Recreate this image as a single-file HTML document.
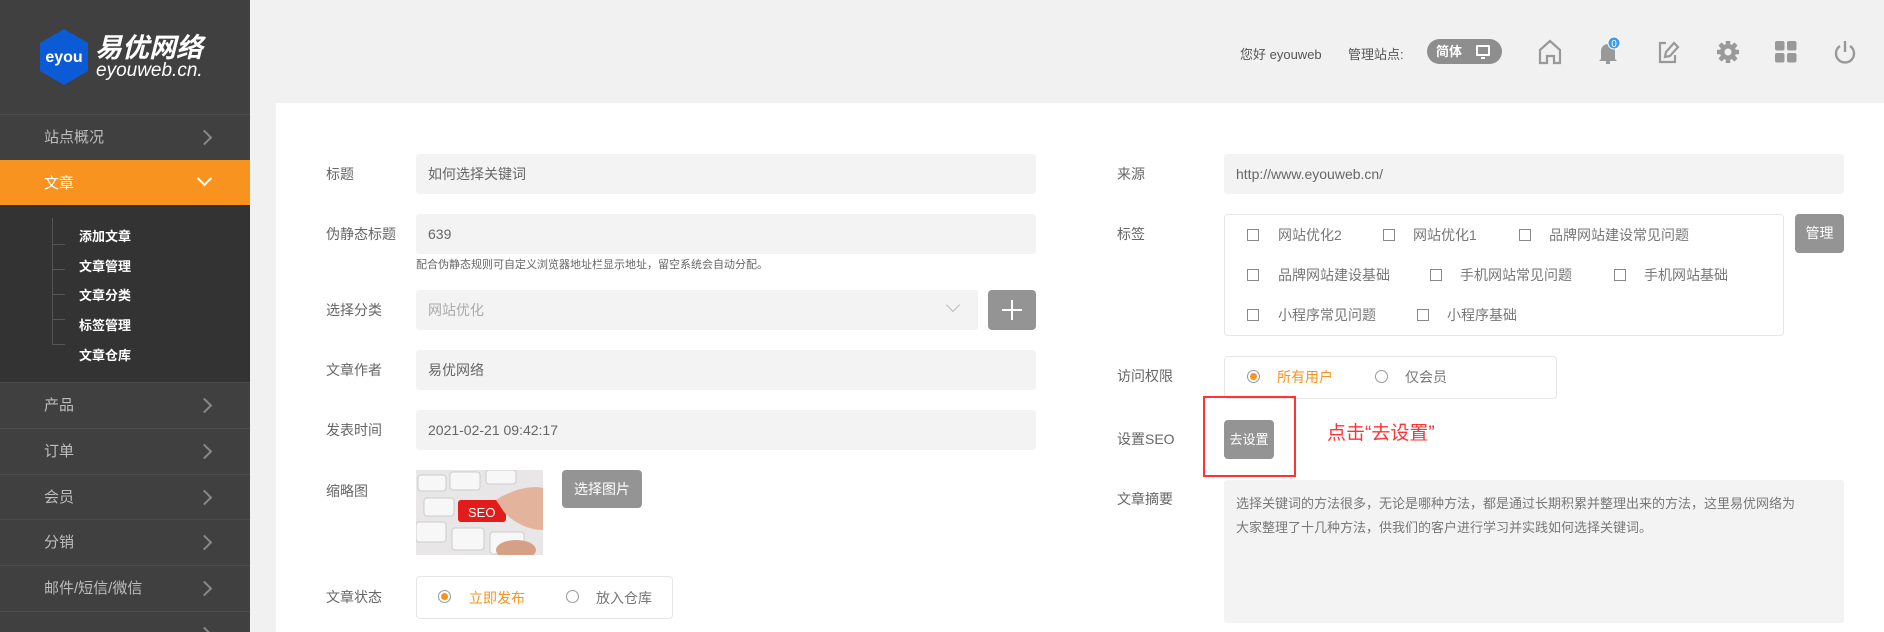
<!DOCTYPE html>
<html><head><meta charset="utf-8"><style>
*{margin:0;padding:0;box-sizing:border-box}
html,body{width:1884px;height:632px;overflow:hidden}
body{background:#f1f1f1;font-family:"Liberation Sans","Noto Sans CJK SC",sans-serif;position:relative}
.a{position:absolute}
.mi{position:absolute;left:0;width:250px;height:46px;border-top:1px solid #4c4c4c;color:#bdbdbd;font-size:15px;line-height:45px;padding-left:44px;overflow:hidden}
.mi .ar{position:absolute;left:199px;top:17px;width:11px;height:11px;border-right:2px solid #888;border-top:2px solid #888;transform:rotate(45deg)}
.sub{position:absolute;left:79px;color:#fff;font-size:13px;font-weight:bold;line-height:16px}
.tl{position:absolute;left:53px;width:12px;border-top:1px solid #555}
.lab{position:absolute;font-size:14px;color:#666;line-height:16px}
.inp{position:absolute;background:#f3f3f3;border-radius:3px;height:40px;font-size:14px;color:#666;line-height:40px;padding-left:12px}
.btn{position:absolute;background:#949494;border-radius:4px;color:#fff;font-size:14px;text-align:center}
.cb{position:absolute;width:12px;height:12px;border:1px solid #888}
.ct{position:absolute;font-size:14px;color:#777;line-height:16px}
.rd{position:absolute;width:13px;height:13px;border:1px solid #999;border-radius:50%}
.rd.on::after{content:"";position:absolute;left:2px;top:2px;width:7px;height:7px;border-radius:50%;background:#f7931e}
.box{position:absolute;border:1px solid #e6e6e6;border-radius:4px;background:#fff}
</style></head><body>
<div class="a" style="left:0;top:0;width:250px;height:632px;background:#404040"></div>
<svg class="a" style="left:40px;top:29px" width="48" height="56" viewBox="0 0 48 56"><polygon points="24,0 48,14 48,42 24,56 0,42 0,14" fill="#0b5bd6"/><text x="24" y="33" font-family="Liberation Sans" font-weight="bold" font-size="16" fill="#fff" text-anchor="middle">eyou</text></svg>
<div class="a" style="left:95px;top:33px;color:#fff;font-size:27px;font-weight:bold;font-style:italic;line-height:30px">易优网络</div>
<div class="a" style="left:96px;top:61px;color:#fff;font-size:19px;font-style:italic;line-height:20px">eyouweb.cn.</div>

<div class="mi" style="top:114px">站点概况<span class="ar"></span></div>
<div class="mi" style="top:160px;background:#f7931e;color:#fff;border-top-color:#f7931e">文章<span class="ar" style="transform:rotate(135deg);top:12px;border-color:#fff"></span></div>
<div class="a" style="left:0;top:205px;width:250px;height:177px;background:#333"></div>
<div class="a" style="left:52px;top:218px;width:1px;height:127px;background:#555"></div>
<div class="tl" style="top:244px"></div>
<div class="tl" style="top:269px"></div>
<div class="tl" style="top:294px"></div>
<div class="tl" style="top:319px"></div>
<div class="tl" style="top:344px"></div>
<div class="sub" style="top:229px">添加文章</div>
<div class="sub" style="top:259px">文章管理</div>
<div class="sub" style="top:288px">文章分类</div>
<div class="sub" style="top:318px">标签管理</div>
<div class="sub" style="top:348px">文章仓库</div>
<div class="mi" style="top:382px">产品<span class="ar"></span></div>
<div class="mi" style="top:428px">订单<span class="ar"></span></div>
<div class="mi" style="top:474px">会员<span class="ar"></span></div>
<div class="mi" style="top:519px">分销<span class="ar"></span></div>
<div class="mi" style="top:565px">邮件/短信/微信<span class="ar"></span></div>
<div class="mi" style="top:611px;height:21px"><span class="ar"></span></div>

<div class="a" style="left:1240px;top:44px;font-size:13px;color:#555">您好 eyouweb</div>
<div class="a" style="left:1348px;top:44px;font-size:13px;color:#555">管理站点:</div>
<div class="a" style="left:1427px;top:39px;width:75px;height:25px;border-radius:13px;background:#8e8e8e;color:#fff;font-size:13px;font-weight:bold;line-height:25px;padding-left:9px">简体</div>
<div class="a" style="left:1476px;top:45px;width:14px;height:11px;border:2px solid #fff;border-radius:1px"></div>
<div class="a" style="left:1481px;top:57px;width:4px;height:2px;background:#fff"></div>
<svg class="a" style="left:1537px;top:38px" width="26" height="28" viewBox="0 0 26 28" fill="none" stroke="#999" stroke-width="2.2"><path d="M3 12 L13 3 L23 12 V25 H17 V18 H10 V25 H3 Z"/></svg>
<svg class="a" style="left:1596px;top:36px" width="26" height="30" viewBox="0 0 26 30"><path d="M5 23 V15 A7 7 0 0 1 19 15 V23 L21 25 H3 Z" fill="#999"/><rect x="10" y="25" width="4" height="3" fill="#999"/><circle cx="18" cy="7" r="6" fill="#3d9be9" stroke="#fff" stroke-width="1"/><text x="18" y="11" font-size="10" fill="#fff" text-anchor="middle" font-family="Liberation Sans">0</text></svg>
<svg class="a" style="left:1655px;top:38px" width="26" height="28" viewBox="0 0 26 28" fill="none" stroke="#999" stroke-width="2.2"><path d="M11 5 H5 V24 H20 V17"/><path d="M10 19 L11 14 L19 5 L23 9 L15 18 Z"/></svg>
<svg class="a" style="left:1715px;top:39px" width="26" height="26" viewBox="0 0 26 26"><circle cx="13" cy="13" r="8" fill="#999"/><g stroke="#999" stroke-width="4.5"><path d="M13 2v22M2 13h22M5 5l16 16M21 5L5 21"/></g><circle cx="13" cy="13" r="3.5" fill="#f1f1f1"/></svg>
<svg class="a" style="left:1774px;top:40px" width="24" height="24" viewBox="0 0 24 24" fill="#999"><rect x="1" y="1" width="9.5" height="9.5" rx="2"/><rect x="13" y="1" width="9.5" height="9.5" rx="2"/><rect x="1" y="13" width="9.5" height="9.5" rx="2"/><rect x="13" y="13" width="9.5" height="9.5" rx="2"/></svg>
<svg class="a" style="left:1832px;top:38px" width="26" height="28" viewBox="0 0 26 28" fill="none" stroke="#999" stroke-width="2.4"><path d="M8 8 A9 9 0 1 0 18 8"/><path d="M13 3 V14"/></svg>

<div class="a" style="left:276px;top:103px;width:1608px;height:529px;background:#fff"></div>

<div class="lab" style="left:326px;top:166px">标题</div>
<div class="inp" style="left:416px;top:154px;width:620px">如何选择关键词</div>
<div class="lab" style="left:326px;top:226px">伪静态标题</div>
<div class="inp" style="left:416px;top:214px;width:620px">639</div>
<div class="a" style="left:416px;top:256px;font-size:11px;color:#666">配合伪静态规则可自定义浏览器地址栏显示地址，留空系统会自动分配。</div>
<div class="lab" style="left:326px;top:302px">选择分类</div>
<div class="inp" style="left:416px;top:290px;width:562px;color:#aaa">网站优化</div>
<div class="a" style="left:948px;top:300px;width:10px;height:10px;border-right:1px solid #bbb;border-bottom:1px solid #bbb;transform:rotate(45deg)"></div>
<div class="btn" style="left:988px;top:290px;width:48px;height:40px"></div>
<div class="a" style="left:1002px;top:309px;width:20px;height:2px;background:#fff"></div>
<div class="a" style="left:1011px;top:300px;width:2px;height:20px;background:#fff"></div>
<div class="lab" style="left:326px;top:362px">文章作者</div>
<div class="inp" style="left:416px;top:350px;width:620px">易优网络</div>
<div class="lab" style="left:326px;top:422px">发表时间</div>
<div class="inp" style="left:416px;top:410px;width:620px">2021-02-21 09:42:17</div>
<div class="lab" style="left:326px;top:483px">缩略图</div>
<svg class="a" style="left:416px;top:470px" width="127" height="85" viewBox="0 0 127 85">
<rect width="127" height="85" fill="#e8e6e6"/>
<g fill="#f7f7f7" stroke="#ccc" stroke-width="1">
<rect x="2" y="5" width="28" height="16" rx="3"/><rect x="34" y="2" width="30" height="18" rx="3"/><rect x="70" y="0" width="30" height="14" rx="3"/>
<rect x="8" y="28" width="30" height="18" rx="3"/><rect x="0" y="52" width="30" height="20" rx="3"/><rect x="36" y="58" width="32" height="22" rx="3"/><rect x="74" y="62" width="34" height="22" rx="3"/></g>
<rect x="42" y="30" width="48" height="22" rx="3" fill="#e21b1b"/>
<text x="52" y="47" font-family="Liberation Sans" font-size="13" fill="#fff">SEO</text>
<path d="M80 30 C95 20 115 15 127 18 V60 C110 60 95 50 88 42 Z" fill="#e4b39c"/>
<ellipse cx="100" cy="80" rx="20" ry="10" fill="#d6a087"/>
</svg>
<div class="btn" style="left:562px;top:470px;width:80px;height:38px;line-height:38px">选择图片</div>
<div class="lab" style="left:326px;top:589px">文章状态</div>
<div class="box" style="left:416px;top:576px;width:257px;height:43px"></div>
<div class="rd on" style="left:438px;top:590px"></div>
<div class="ct" style="left:469px;top:590px;color:#f7931e">立即发布</div>
<div class="rd" style="left:566px;top:590px"></div>
<div class="ct" style="left:596px;top:590px">放入仓库</div>

<div class="lab" style="left:1117px;top:166px">来源</div>
<div class="inp" style="left:1224px;top:154px;width:620px">http://www.eyouweb.cn/</div>
<div class="lab" style="left:1117px;top:226px">标签</div>
<div class="box" style="left:1224px;top:214px;width:560px;height:122px"></div>
<div class="cb" style="left:1247px;top:229px"></div><div class="ct" style="left:1278px;top:227px">网站优化2</div>
<div class="cb" style="left:1383px;top:229px"></div><div class="ct" style="left:1413px;top:227px">网站优化1</div>
<div class="cb" style="left:1519px;top:229px"></div><div class="ct" style="left:1549px;top:227px">品牌网站建设常见问题</div>
<div class="cb" style="left:1247px;top:269px"></div><div class="ct" style="left:1278px;top:267px">品牌网站建设基础</div>
<div class="cb" style="left:1430px;top:269px"></div><div class="ct" style="left:1460px;top:267px">手机网站常见问题</div>
<div class="cb" style="left:1614px;top:269px"></div><div class="ct" style="left:1644px;top:267px">手机网站基础</div>
<div class="cb" style="left:1247px;top:309px"></div><div class="ct" style="left:1278px;top:307px">小程序常见问题</div>
<div class="cb" style="left:1417px;top:309px"></div><div class="ct" style="left:1447px;top:307px">小程序基础</div>
<div class="btn" style="left:1795px;top:214px;width:49px;height:39px;line-height:39px">管理</div>
<div class="lab" style="left:1117px;top:368px">访问权限</div>
<div class="box" style="left:1224px;top:356px;width:333px;height:43px"></div>
<div class="rd on" style="left:1247px;top:370px"></div>
<div class="ct" style="left:1277px;top:369px;color:#f7931e">所有用户</div>
<div class="rd" style="left:1375px;top:370px"></div>
<div class="ct" style="left:1405px;top:369px">仅会员</div>
<div class="lab" style="left:1117px;top:431px">设置SEO</div>
<div class="a" style="left:1203px;top:396px;width:93px;height:81px;border:2px solid #f33"></div>
<div class="btn" style="left:1224px;top:420px;width:50px;height:39px;line-height:39px;font-size:13px">去设置</div>
<div class="a" style="left:1327px;top:418px;font-size:19px;color:#f33">点击“去设置”</div>
<div class="lab" style="left:1117px;top:491px">文章摘要</div>
<div class="a" style="left:1224px;top:480px;width:620px;height:143px;background:#f3f3f3;border-radius:3px;padding:12px 45px 12px 12px;font-size:13px;line-height:24px;color:#777">选择关键词的方法很多，无论是哪种方法，都是通过长期积累并整理出来的方法，这里易优网络为大家整理了十几种方法，供我们的客户进行学习并实践如何选择关键词。</div>
</body></html>
